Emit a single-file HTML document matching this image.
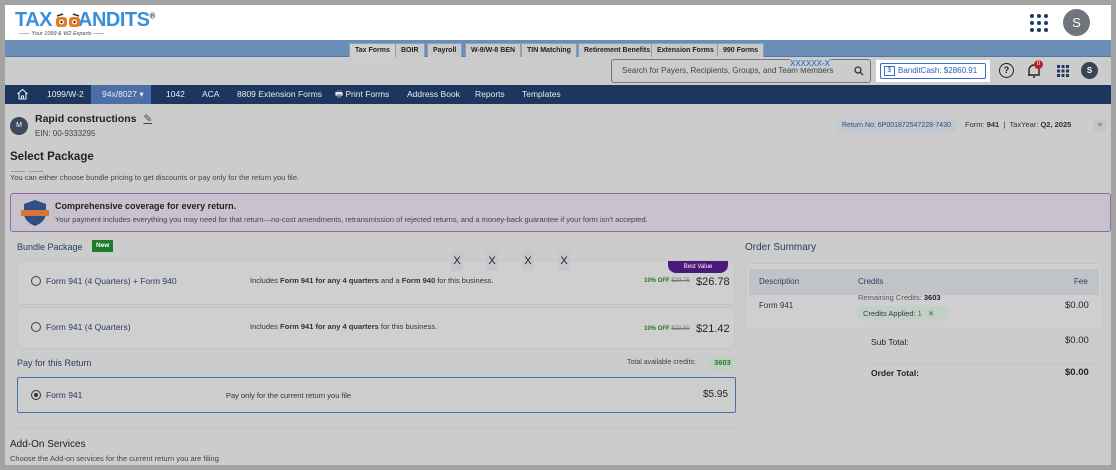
<!DOCTYPE html>
<html><head><meta charset="utf-8"><style>
*{box-sizing:border-box;margin:0;padding:0}
body{width:1116px;height:470px;background:#a3a3a3;font-family:"Liberation Sans",sans-serif;position:relative;overflow:hidden;color:#222}
.a{position:absolute;white-space:nowrap}
#frame{position:absolute;left:5px;top:5px;width:1106px;height:460px;background:#cccccc;overflow:hidden}
.tab{position:absolute;top:3px;height:14px;background:#c9c9c9;border:1px solid #8aa0b8;border-bottom:none;font-size:7px;font-weight:bold;line-height:13px;padding:0 5px;color:#222}
.nav{position:absolute;top:85px;font-size:8.5px;color:#e8ecf2;line-height:18px}
.card{position:absolute;background:#cfcfcf;border:1px solid #c4c4c4;border-radius:4px}
.radio{position:absolute;width:10px;height:10px;border:1px solid #444;border-radius:50%}
.s{font-size:8px;color:#333}
</style></head><body>
<div id="frame">
<!-- header -->
<div class="a" style="left:0;top:0;width:1106px;height:35px;background:#fff"></div>
<div class="a" style="left:10px;top:4px;font-size:20px;font-weight:bold;color:#3a8fd6;letter-spacing:-0.5px">TAX<span style="display:inline-block;width:26px"></span>ANDITS<sup style="font-size:8px;color:#333">®</sup></div>
<svg class="a" style="left:50px;top:6px" width="26" height="18"><rect x="1" y="6" width="11" height="10" rx="3" fill="#e87a20"/><rect x="14" y="6" width="11" height="10" rx="3" fill="#e87a20"/><circle cx="6.5" cy="11" r="2.5" fill="#fff"/><circle cx="19.5" cy="11" r="2.5" fill="#fff"/><circle cx="6.5" cy="11" r="1.2" fill="#333"/><circle cx="19.5" cy="11" r="1.2" fill="#333"/><path d="M2 5 L8 3 M24 5 L18 3" stroke="#333" stroke-width="1.5"/></svg>
<div class="a" style="left:14px;top:26px;font-size:5.5px;color:#444;font-style:italic">—— Your 1099 &amp; W2 Experts ——</div>
<svg class="a" style="left:1024px;top:8px" width="20" height="20"><g fill="#1d3a66"><circle cx="3" cy="3" r="2"/><circle cx="10" cy="3" r="2"/><circle cx="17" cy="3" r="2"/><circle cx="3" cy="10" r="2"/><circle cx="10" cy="10" r="2"/><circle cx="17" cy="10" r="2"/><circle cx="3" cy="17" r="2"/><circle cx="10" cy="17" r="2"/><circle cx="17" cy="17" r="2"/></g></svg>
<div class="a" style="left:1058px;top:4px;width:27px;height:27px;border-radius:50%;background:#6f757b;color:#fff;font-size:13px;text-align:center;line-height:27px">S</div>
<!-- blue tab bar -->
<div class="a" style="left:0;top:35px;width:1106px;height:17px;background:#6a8fb6;border-bottom:1px solid #5478a0"></div>
<div class="tab" style="left:344px;top:38px;background:#cfcfcf">Tax Forms</div>
<div class="tab" style="left:390px;top:38px">BOIR</div>
<div class="tab" style="left:422px;top:38px">Payroll</div>
<div class="tab" style="left:460px;top:38px">W-9/W-8 BEN</div>
<div class="tab" style="left:516px;top:38px">TIN Matching</div>
<div class="tab" style="left:573px;top:38px">Retirement Benefits</div>
<div class="tab" style="left:646px;top:38px">Extension Forms</div>
<div class="tab" style="left:712px;top:38px">990 Forms</div>
<!-- gray bar -->
<div class="a" style="left:606px;top:54px;width:260px;height:24px;border:1px solid #777;border-radius:3px;font-size:8px;color:#444;line-height:22px;padding-left:10px">Search for Payers, Recipients, Groups, and Team Members</div>
<div class="a" style="left:785px;top:54px;font-size:8px;color:#2a5fa8;background:#c4cbd4">XXXXXX-X</div>
<svg class="a" style="left:849px;top:61px" width="10" height="10"><circle cx="4" cy="4" r="3" fill="none" stroke="#333" stroke-width="1.3"/><path d="M6.5 6.5 9 9" stroke="#333" stroke-width="1.3"/></svg>
<div class="a" style="left:871px;top:55px;width:114px;height:22px;background:#fff"></div>
<div class="a" style="left:875px;top:58px;width:106px;height:16px;border:1px solid #3a6fc8;border-radius:2px;font-size:8px;color:#2a5fb8;line-height:14px;padding-left:17px">BanditCash: $2860.91</div>
<div class="a" style="left:879px;top:61px;width:11px;height:10px;border:1px solid #3a6fc8;font-size:7px;color:#3a6fc8;line-height:8px;text-align:center">$</div>
<div class="a" style="left:994px;top:58px;width:15px;height:15px;border:1.5px solid #222;border-radius:50%;font-size:9px;text-align:center;line-height:12px;font-weight:bold">?</div>
<svg class="a" style="left:1021px;top:57px" width="16" height="18"><path d="M3 13 V8 a5 5 0 0 1 10 0 V13 H2 M7 15 h2" fill="none" stroke="#222" stroke-width="1.4"/></svg>
<div class="a" style="left:1029px;top:55px;width:9px;height:9px;border-radius:50%;background:#c0202a;color:#fff;font-size:6px;text-align:center;line-height:9px">0</div>
<svg class="a" style="left:1052px;top:60px" width="12" height="12"><g fill="#1d3a66"><rect x="0" y="0" width="3" height="3"/><rect x="4.5" y="0" width="3" height="3"/><rect x="9" y="0" width="3" height="3"/><rect x="0" y="4.5" width="3" height="3"/><rect x="4.5" y="4.5" width="3" height="3"/><rect x="9" y="4.5" width="3" height="3"/><rect x="0" y="9" width="3" height="3"/><rect x="4.5" y="9" width="3" height="3"/><rect x="9" y="9" width="3" height="3"/></g></svg>
<div class="a" style="left:1076px;top:57px;width:17px;height:17px;border-radius:50%;background:#374556;color:#fff;font-size:8px;text-align:center;line-height:17px;font-weight:bold">S</div>
<!-- nav -->
<div class="a" style="left:0;top:80px;width:1106px;height:19px;background:#1c365e"></div>
<div class="a" style="left:86px;top:80px;width:60px;height:19px;background:#4a6fa8"></div>
<svg class="a" style="left:11px;top:83px" width="13" height="12"><path d="M1.5 6 6.5 1.5 11.5 6 M3 5 V11 H10 V5 M5.5 11 V8 H7.5 V11" fill="none" stroke="#e8ecf2" stroke-width="1.1"/></svg>
<div class="nav" style="left:42px;top:80px">1099/W-2</div>
<div class="nav" style="left:97px;top:80px">94x/8027 ▾</div>
<div class="nav" style="left:161px;top:80px">1042</div>
<div class="nav" style="left:197px;top:80px">ACA</div>
<div class="nav" style="left:232px;top:80px">8809 Extension Forms</div>
<div class="nav" style="left:330px;top:80px">🖶 Print Forms</div>
<div class="nav" style="left:402px;top:80px">Address Book</div>
<div class="nav" style="left:470px;top:80px">Reports</div>
<div class="nav" style="left:517px;top:80px">Templates</div>
<!-- business -->
<div class="a" style="left:5px;top:112px;width:18px;height:18px;border-radius:50%;background:#3c4a5c;color:#fff;font-size:7px;text-align:center;line-height:18px">M</div>
<div class="a" style="left:30px;top:108px;font-size:10.5px;font-weight:bold;color:#222">Rapid constructions <span style="font-weight:normal;color:#444;text-decoration:underline;margin-left:4px">✎</span></div>
<div class="a" style="left:30px;top:124px;font-size:8px;color:#444">EIN: 00-9333295</div>
<div class="a" style="left:831px;top:114px;width:121px;height:14px;background:#c2c8d0;border-radius:7px;font-size:7px;color:#3a4a6a;text-align:center;line-height:14px">Return No: 6P001872547228-7430</div>
<div class="a" style="left:960px;top:115px;font-size:7.5px;color:#333">Form: <b>941</b> &nbsp;| &nbsp;TaxYear: <b>Q2, 2025</b></div>
<div class="a" style="left:1088px;top:114px;width:14px;height:14px;border-radius:50%;background:#c4c4c4;font-size:7px;text-align:center;line-height:14px;color:#666">≡</div>
<!-- select package -->
<div class="a" style="left:5px;top:146px;font-size:11.5px;font-weight:bold;color:#222">Select Package</div>
<div class="a" style="left:6px;top:166px;width:14px;height:1px;background:#8a9ab0"></div>
<div class="a" style="left:24px;top:166px;width:14px;height:1px;background:#8a9ab0"></div>
<div class="a" style="left:5px;top:168px;font-size:7.5px;color:#444">You can either choose bundle pricing to get discounts or pay only for the return you file.</div>
<div class="a" style="left:5px;top:188px;width:1101px;height:39px;background:#c8c2cf;border:1px solid #8e6cab;border-radius:3px"></div>
<svg class="a" style="left:15px;top:193px" width="30" height="30"><path d="M15 2 L26 6 V15 C26 22 20 26 15 28 C10 26 4 22 4 15 V6 Z" fill="#2f4f86"/><rect x="1" y="12" width="28" height="6" fill="#d8763a"/></svg>
<div class="a" style="left:50px;top:196px;font-size:9px;font-weight:bold;color:#222">Comprehensive coverage for every return.</div>
<div class="a" style="left:50px;top:210px;font-size:7.5px;color:#444">Your payment includes everything you may need for that return—no-cost amendments, retransmission of rejected returns, and a money-back guarantee if your form isn't accepted.</div>
<!-- bundle -->
<div class="a" style="left:12px;top:237px;font-size:9px;color:#2a3e5e">Bundle Package</div>
<div class="a" style="left:87px;top:235px;height:12px;padding:0 4px;background:#1f7a2e;color:#fff;font-size:6.5px;font-weight:bold;line-height:12px;border-radius:1px">New</div>
<div class="card" style="left:12px;top:255px;width:718px;height:45px"></div>
<div class="a" style="left:663px;top:256px;width:60px;height:12px;background:#4a1a7a;border-radius:0 0 8px 8px;color:#fff;font-size:6px;text-align:center;line-height:12px">Best Value</div>
<div class="radio" style="left:26px;top:271px"></div>
<div class="a s" style="left:41px;top:271px;font-size:8.5px;color:#2a3e5e">Form 941 (4 Quarters) + Form 940</div>
<div class="a s" style="left:245px;top:271px;font-size:7.5px">Includes <b>Form 941 for any 4 quarters</b> and a <b>Form 940</b> for this business.</div>
<div class="a" style="left:639px;top:273px;font-size:6px;color:#1f7a2e;font-weight:bold">10% OFF <s style="color:#777;font-weight:normal">$29.75</s></div>
<div class="a" style="left:691px;top:271px;font-size:11px;color:#222">$26.78</div>
<div class="a" style="left:446px;top:246px;width:12px;height:20px;background:#c4c8cc;font-size:11px;text-align:center;line-height:20px">X</div>
<div class="a" style="left:481px;top:246px;width:12px;height:20px;background:#c4c8cc;font-size:11px;text-align:center;line-height:20px">X</div>
<div class="a" style="left:517px;top:246px;width:12px;height:20px;background:#c4c8cc;font-size:11px;text-align:center;line-height:20px">X</div>
<div class="a" style="left:553px;top:246px;width:12px;height:20px;background:#c4c8cc;font-size:11px;text-align:center;line-height:20px">X</div>
<div class="card" style="left:12px;top:302px;width:718px;height:42px"></div>
<div class="radio" style="left:26px;top:317px"></div>
<div class="a s" style="left:41px;top:317px;font-size:8.5px;color:#2a3e5e">Form 941 (4 Quarters)</div>
<div class="a s" style="left:245px;top:317px;font-size:7.5px">Includes <b>Form 941 for any 4 quarters</b> for this business.</div>
<div class="a" style="left:639px;top:321px;font-size:6px;color:#1f7a2e;font-weight:bold">10% OFF <s style="color:#777;font-weight:normal">$23.80</s></div>
<div class="a" style="left:691px;top:318px;font-size:11px;color:#222">$21.42</div>
<div class="a" style="left:12px;top:353px;font-size:9px;color:#2a3e5e">Pay for this Return</div>
<div class="a" style="left:622px;top:354px;font-size:7px;color:#444">Total available credits:</div>
<div class="a" style="left:705px;top:351px;width:25px;height:14px;background:#c0d0c0;font-size:7.5px;color:#1f7a2e;font-weight:bold;text-align:center;line-height:14px">3603</div>
<div class="a" style="left:12px;top:372px;width:719px;height:36px;border:1px solid #4a6fa8;border-radius:2px;background:#cdcdcd"></div>
<div class="a" style="left:26px;top:385px;width:10px;height:10px;border:1px solid #333;border-radius:50%"><div style="margin:2px;width:4px;height:4px;border-radius:50%;background:#333"></div></div>
<div class="a s" style="left:41px;top:385px;font-size:8.5px;color:#2a3e5e">Form 941</div>
<div class="a s" style="left:221px;top:386px;font-size:7.5px">Pay only for the current return you file</div>
<div class="a" style="left:698px;top:384px;font-size:10px;color:#222">$5.95</div>
<div class="a" style="left:5px;top:423px;width:727px;height:1px;background:#c4c4c4"></div>
<div class="a" style="left:5px;top:434px;font-size:10px;color:#222">Add-On Services</div>
<div class="a" style="left:5px;top:449px;font-size:7.5px;color:#444">Choose the Add-on services for the current return you are filing</div>
<!-- order summary -->
<div class="a" style="left:740px;top:237px;font-size:10px;color:#2a3e5e">Order Summary</div>
<div class="card" style="left:740px;top:258px;width:358px;height:67px;background:#cfcfcf"></div>
<div class="a" style="left:744px;top:264px;width:350px;height:26px;background:#c0c4c9"></div>
<div class="a s" style="left:754px;top:268px;font-size:8px;color:#2a3e5e;line-height:18px">Description</div>
<div class="a s" style="left:853px;top:268px;font-size:8px;color:#2a3e5e;line-height:18px">Credits</div>
<div class="a s" style="left:1069px;top:268px;font-size:8px;color:#2a3e5e;line-height:18px">Fee</div>
<div class="a s" style="left:754px;top:296px;font-size:8px">Form 941</div>
<div class="a s" style="left:853px;top:288px;font-size:7.5px;color:#555">Remaining Credits: <b style="color:#222">3603</b></div>
<div class="a" style="left:851px;top:301px;width:93px;height:15px;background:#c2cfc4;border-radius:8px;font-size:7.5px;color:#2a3e5e;line-height:15px;padding-left:7px">Credits Applied: <span style="color:#1f7a2e">1</span> <span style="color:#1f7a2e;margin-left:4px">✕</span></div>
<div class="a" style="left:1060px;top:295px;font-size:9.5px;color:#222">$0.00</div>
<div class="a" style="left:866px;top:332px;font-size:8.5px;color:#222">Sub Total:</div>
<div class="a" style="left:1060px;top:330px;font-size:9.5px;color:#222">$0.00</div>
<div class="a" style="left:866px;top:359px;width:224px;height:1px;background:#c2c2c2"></div>
<div class="a" style="left:866px;top:363px;font-size:8.5px;font-weight:bold;color:#222">Order Total:</div>
<div class="a" style="left:1060px;top:362px;font-size:9.5px;font-weight:bold;color:#222">$0.00</div>
</div>
</body></html>
